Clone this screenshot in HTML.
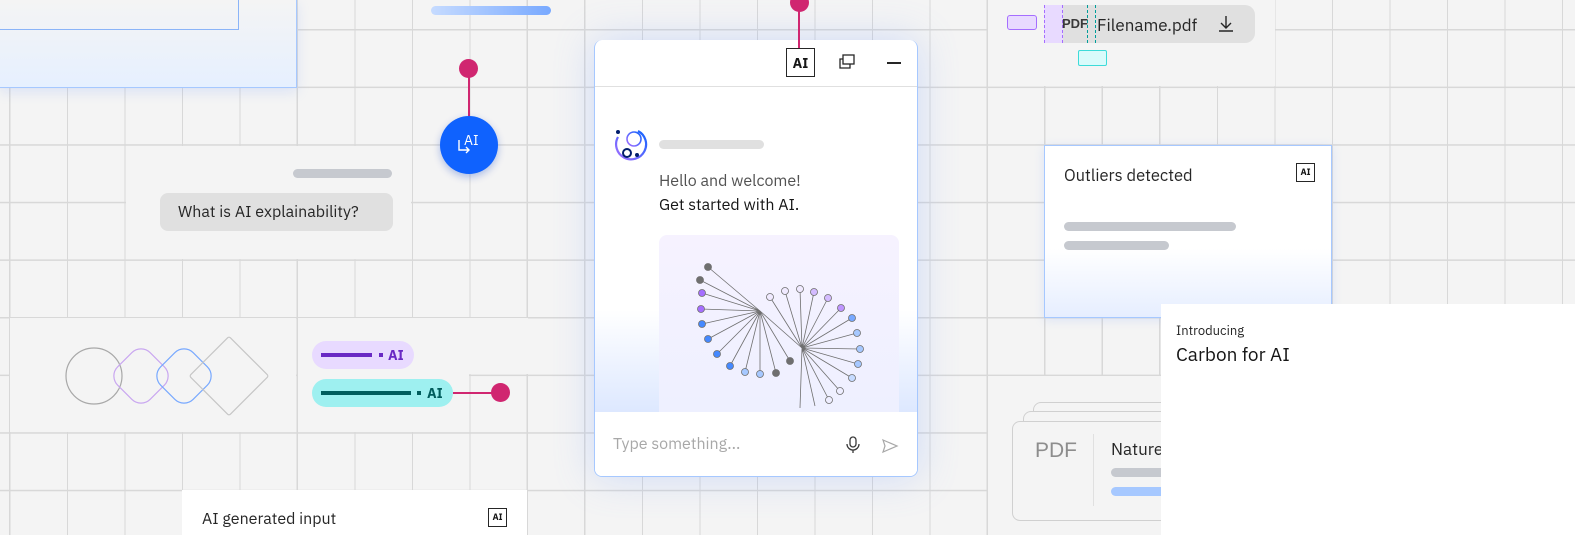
<!DOCTYPE html>
<html><head><meta charset="utf-8">
<style>
*{margin:0;padding:0;box-sizing:border-box}
body{width:1575px;height:535px;overflow:hidden;background:#f4f4f4;font-family:"IBM Plex Sans","Liberation Sans",sans-serif;color:#161616;position:relative}
.a{position:absolute}
.t{font-size:16px;color:#262626}
.aibox{position:absolute;border:1px solid #262626;font-size:10px;font-weight:bold;display:flex;align-items:center;justify-content:center;background:#fff}
</style></head><body>
<svg class="a" style="left:0;top:0" width="1575" height="535">
<defs><pattern id="p" patternUnits="userSpaceOnUse" x="9" y="29" width="57.5" height="57.6"><path d="M0.75 0V57.6M0 0.75H57.5" stroke="#d8d8d8" stroke-width="1.5"/></pattern></defs>
<rect width="1575" height="535" fill="url(#p)"/>
<g fill="#f4f4f4">
<rect x="126" y="146" width="285" height="113"/>
<rect x="10" y="318" width="286" height="114"/>
<rect x="298" y="318" width="171" height="114"/><rect x="298" y="318" width="230" height="56"/>
<rect x="988" y="0" width="287" height="86"/>
<rect x="988" y="376" width="180" height="159"/>
</g>
</svg>
<!-- top left card -->
<div class="a" style="left:0;top:0;width:297px;height:88px;background:linear-gradient(#f4f4f4,#e6f0ff);border:1px solid #a6c8ff;border-left:none;border-top:none;box-shadow:0 4px 12px rgba(120,160,255,.2)"></div>
<div class="a" style="left:0;top:0;width:239px;height:30px;border:1px solid #8ab4f8;border-top:none;border-left:none"></div>
<div class="a" style="left:431px;top:6px;width:120px;height:9px;border-radius:5px;background:linear-gradient(90deg,#c6dbff,#78a9ff)"></div>
<!-- magenta + blue button -->
<div class="a" style="left:468px;top:68px;width:2px;height:50px;background:#d02670"></div>
<div class="a" style="left:459px;top:59px;width:19px;height:19px;border-radius:50%;background:#d02670"></div>
<div class="a" style="left:440px;top:116px;width:58px;height:58px;border-radius:50%;background:#0f62fe;box-shadow:0 3px 8px rgba(0,60,200,.3);color:#fff;font-size:14px"><span class="a" style="left:24px;top:15px">AI</span>
<svg class="a" style="left:17px;top:22px" width="16" height="18"><path d="M2 2V12H12M9 9l3 3-3 3" stroke="#fff" stroke-width="1.4" fill="none"/></svg></div>
<!-- bubble -->
<div class="a" style="left:293px;top:169px;width:99px;height:9px;border-radius:5px;background:#c6c9cf"></div>
<div class="a t" style="left:160px;top:193px;width:233px;height:38px;border-radius:8px;background:#e0e0e0;padding:9px 0 0 18px;font-size:16px">What is AI explainability?</div>
<!-- shapes -->
<svg class="a" style="left:0;top:300px" width="300" height="140">
<circle cx="94" cy="76" r="28" stroke="#a8a8a8" fill="none" stroke-width="1.2"/>
<rect x="118" y="53" width="46" height="46" rx="13" transform="rotate(45 141 76)" stroke="#c9a7f0" fill="none" stroke-width="1.2"/>
<rect x="161" y="53" width="46" height="46" rx="13" transform="rotate(45 184 76)" stroke="#78a9ff" fill="none" stroke-width="1.2"/>
<rect x="201" y="48" width="56" height="56" rx="2" transform="rotate(45 229 76)" stroke="#c6c6c6" fill="none" stroke-width="1.2"/>
</svg>
<!-- tags -->
<div class="a" style="left:312px;top:341px;width:102px;height:28px;border-radius:14px;background:#e8daff"><div class="a" style="left:9px;top:12px;width:51px;height:4px;background:#6929c4"></div><div class="a" style="left:67px;top:12px;width:4px;height:4px;background:#6929c4"></div><span class="a" style="left:76px;top:5px;font-size:14px;font-weight:bold;color:#6929c4">AI</span></div>
<div class="a" style="left:312px;top:379px;width:141px;height:28px;border-radius:14px;background:#9ef0f0"><div class="a" style="left:9px;top:12px;width:90px;height:4px;background:#005d5d"></div><div class="a" style="left:105px;top:12px;width:4px;height:4px;background:#005d5d"></div><span class="a" style="left:115px;top:5px;font-size:14px;font-weight:bold;color:#005d5d">AI</span></div>
<div class="a" style="left:453px;top:392px;width:40px;height:1.5px;background:#d02670"></div>
<div class="a" style="left:491px;top:383px;width:19px;height:19px;border-radius:50%;background:#d02670"></div>
<!-- AI generated input -->
<div class="a" style="left:182px;top:490px;width:345px;height:45px;background:#fff"><span class="a t" style="left:20px;top:19px">AI generated input</span><div class="aibox" style="left:306px;top:18px;width:19px;height:19px;font-size:9px">AI</div></div>
<!-- chat card -->
<div class="a" style="left:594px;top:40px;width:324px;height:437px;background:#fff;border-radius:8px;border:1px solid #a6c8ff;border-top:none;box-shadow:0 0 40px rgba(120,160,255,.3);overflow:hidden">
<div class="a" style="left:0;top:46px;width:324px;height:1px;background:#e0e0e0"></div>
<div class="a" style="left:0;top:270px;width:324px;height:102px;background:linear-gradient(rgba(255,255,255,0),#dde8ff)"></div>
<div class="a" style="left:0;top:372px;width:324px;height:65px;background:#fff"></div>
<span class="a" style="left:18px;top:394px;font-size:16px;color:#a8a8a8">Type something...</span>
<svg class="a" style="left:250px;top:396px" width="16" height="18"><rect x="5" y="1" width="6" height="10" rx="3" stroke="#393939" fill="none" stroke-width="1.3"/><path d="M2 8a6 6 0 0 0 12 0M8 14v3" stroke="#393939" fill="none" stroke-width="1.3"/></svg>
<svg class="a" style="left:286px;top:398px" width="18" height="16"><path d="M2 2L16 8L2 14L4 8Z" stroke="#a8a8a8" fill="none" stroke-width="1.2"/></svg>
</div>
<div class="a" style="left:798px;top:0;width:2px;height:50px;background:#d02670"></div>
<div class="a" style="left:790px;top:-7px;width:19px;height:19px;border-radius:50%;background:#d02670"></div>
<div class="aibox" style="left:786px;top:48px;width:29px;height:29px;font-size:14px;border-width:1.5px">AI</div>
<svg class="a" style="left:837px;top:53px" width="20" height="18"><rect x="6" y="2" width="11" height="9" stroke="#262626" fill="none" stroke-width="1.3"/><path d="M6 6H3V15H13V11" stroke="#262626" fill="none" stroke-width="1.3"/></svg>
<div class="a" style="left:887px;top:62px;width:14px;height:1.5px;background:#262626"></div>
<svg class="a" style="left:612px;top:126px" width="36" height="36">
<defs><linearGradient id="g" x1="0" x2="1" y1="1" y2="0"><stop offset="0" stop-color="#a56eff"/><stop offset="1" stop-color="#0f62fe"/></linearGradient></defs>
<path d="M6 11A15 15 0 1 0 26 5" stroke="url(#g)" stroke-width="2.2" fill="none"/>
<circle cx="22" cy="13" r="7" stroke="url(#g)" stroke-width="1.6" fill="none"/>
<circle cx="15" cy="27" r="4" stroke="#001d6c" stroke-width="2" fill="none"/>
<circle cx="6" cy="6" r="2" fill="#001d6c"/><circle cx="25" cy="29" r="2" fill="#001d6c"/>
</svg>
<div class="a" style="left:659px;top:140px;width:105px;height:9px;border-radius:5px;background:#e0e0e0"></div>
<span class="a" style="left:659px;top:171px;font-size:16px;color:#525252">Hello and welcome!</span>
<span class="a" style="left:659px;top:195px;font-size:16px;color:#161616">Get started with AI.</span>
<div class="a" style="left:659px;top:235px;width:240px;height:177px;border-radius:8px 8px 0 0;background:linear-gradient(#f6f2ff,#eef0ff)"></div>
<svg class="a" style="left:692px;top:260px" width="180" height="152">
<g stroke="#6f6f6f" stroke-width="0.8">
<path d="M68 51L16 7M68 51L8 20M68 51L10 33M68 51L9 49M68 51L10 64M68 51L16 79M68 51L25 94M68 51L38 106M68 51L53 112M68 51L68 114M68 51L84 113M68 51L98 101"/>
<path d="M110 88L78 37M110 88L93 31M110 88L108 29M110 88L122 32M110 88L136 38M110 88L149 48M110 88L160 58M110 88L165 73M110 88L168 89M110 88L166 104M110 88L160 118M110 88L148 131M110 88L137 140M110 88L123 146M110 88L108 148"/>
<path d="M68 51L110 88"/>
</g>
<g stroke="#6f6f6f" stroke-width="0.8">
<circle cx="16" cy="7" r="3.5" fill="#6f6f6f"/><circle cx="8" cy="20" r="3.5" fill="#6f6f6f"/><circle cx="10" cy="33" r="3.5" fill="#a56eff"/><circle cx="9" cy="49" r="3.5" fill="#a56eff"/><circle cx="10" cy="64" r="3.5" fill="#4589ff"/><circle cx="16" cy="79" r="3.5" fill="#4589ff"/><circle cx="25" cy="94" r="3.5" fill="#4589ff"/><circle cx="38" cy="106" r="3.5" fill="#4589ff"/><circle cx="53" cy="112" r="3.5" fill="#a6c8ff"/><circle cx="68" cy="114" r="3.5" fill="#a6c8ff"/><circle cx="84" cy="113" r="3.5" fill="#6f6f6f"/><circle cx="98" cy="101" r="3.5" fill="#6f6f6f"/>
<circle cx="78" cy="37" r="3.5" fill="#f0eaff"/><circle cx="93" cy="31" r="3.5" fill="#f0eaff"/><circle cx="108" cy="29" r="3.5" fill="#f0eaff"/><circle cx="122" cy="32" r="3.5" fill="#d4bbff"/><circle cx="136" cy="38" r="3.5" fill="#d4bbff"/><circle cx="149" cy="48" r="3.5" fill="#be95ff"/><circle cx="160" cy="58" r="3.5" fill="#78a9ff"/><circle cx="165" cy="73" r="3.5" fill="#a6c8ff"/><circle cx="168" cy="89" r="3.5" fill="#a6c8ff"/><circle cx="166" cy="104" r="3.5" fill="#a6c8ff"/><circle cx="160" cy="118" r="3.5" fill="#c6dbff"/><circle cx="148" cy="131" r="3.5" fill="#eef"/><circle cx="137" cy="140" r="3.5" fill="#eef"/>
</g>
</svg>
<!-- filename -->
<div class="a" style="left:1044px;top:5px;width:211px;height:38px;border-radius:10px;background:#e0e0e0"></div>
<div class="a" style="left:1044px;top:5px;width:19px;height:38px;background:#e8daff;border-left:1px dashed #a56eff;border-right:1px dashed #a56eff"></div>
<div class="a" style="left:1087px;top:5px;width:9px;height:38px;border-left:1px dashed #009d9a;border-right:1px dashed #009d9a"></div>
<div class="a" style="left:1007px;top:15px;width:30px;height:15px;border-radius:3px;background:#e8daff;border:1.5px solid #a56eff"></div>
<div class="a" style="left:1078px;top:50px;width:29px;height:16px;border-radius:2px;background:#d9fbfb;border:1.5px solid #3ddbd9"></div>
<span class="a" style="left:1062px;top:16px;font-size:13px;font-weight:bold;color:#393939;font-family:'Liberation Sans Narrow','Liberation Sans',sans-serif">PDF</span>
<span class="a t" style="left:1097px;top:14px;font-size:17px">Filename.pdf</span>
<svg class="a" style="left:1216px;top:14px" width="20" height="20"><path d="M10 2V14M5 9l5 5 5-5M3 17H17" stroke="#262626" fill="none" stroke-width="1.4"/></svg>
<!-- outliers -->
<div class="a" style="left:1044px;top:145px;width:288px;height:173px;background:linear-gradient(#fff 60%,#e6eeff);border:1px solid #a6c8ff;box-shadow:0 2px 10px rgba(120,160,255,.2)">
<span class="a t" style="left:19px;top:18px;font-size:16.5px">Outliers detected</span>
<div class="aibox" style="left:251px;top:17px;width:19px;height:19px;font-size:9px">AI</div>
<div class="a" style="left:19px;top:76px;width:172px;height:9px;border-radius:5px;background:#c6c9cf"></div>
<div class="a" style="left:19px;top:95px;width:105px;height:9px;border-radius:5px;background:#c6c9cf"></div>
</div>
<!-- pdf stack -->
<div class="a" style="left:1033px;top:402px;width:200px;height:100px;border:1px solid #d0d0d0;border-radius:8px"></div>
<div class="a" style="left:1023px;top:411px;width:200px;height:100px;border:1px solid #d0d0d0;border-radius:8px;background:#f4f4f4"></div>
<div class="a" style="left:1012px;top:421px;width:200px;height:100px;border:1px solid #d0d0d0;border-radius:8px;background:#f4f4f4">
<span class="a" style="left:22px;top:17px;font-size:21px;color:#8d8d8d;font-family:'Liberation Sans Narrow','Liberation Sans',sans-serif">PDF</span>
<div class="a" style="left:80px;top:12px;width:1px;height:72px;background:#e0e0e0"></div>
<span class="a t" style="left:98px;top:16px;font-size:17px">Nature</span>
<div class="a" style="left:98px;top:46px;width:80px;height:9px;border-radius:5px;background:#c6c9cf"></div>
<div class="a" style="left:98px;top:65px;width:80px;height:9px;border-radius:5px;background:#a6c8ff"></div>
</div>
<!-- introducing -->
<div class="a" style="left:1161px;top:304px;width:414px;height:231px;background:#fff">
<span class="a" style="left:15px;top:18px;font-size:13px;color:#262626">Introducing</span>
<span class="a" style="left:15px;top:39px;font-size:19px;color:#161616">Carbon for AI</span>
</div>
</body></html>
